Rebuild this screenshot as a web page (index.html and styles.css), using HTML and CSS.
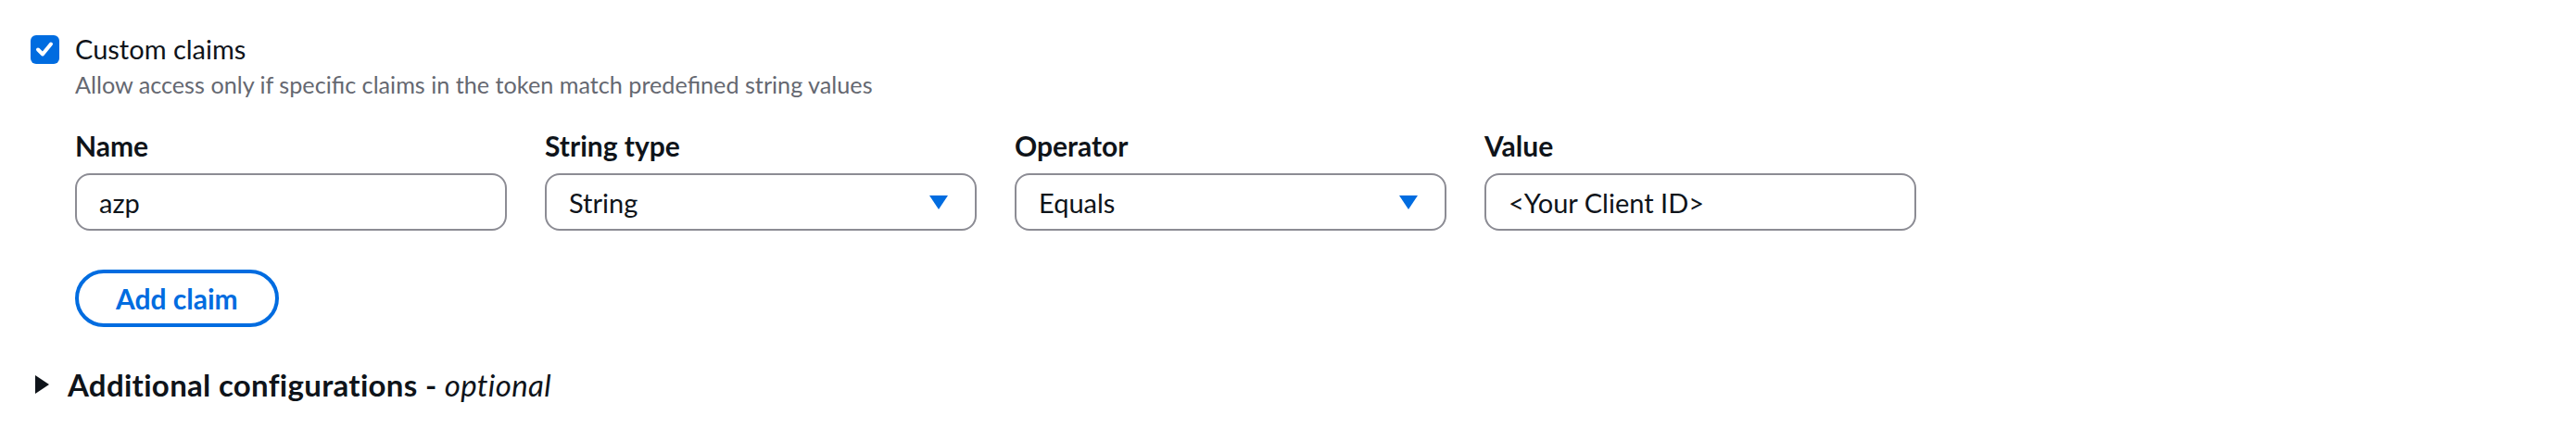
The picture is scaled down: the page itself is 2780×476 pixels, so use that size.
FILE: index.html
```html
<!DOCTYPE html>
<html lang="en">
<head>
<meta charset="utf-8">
<title>Custom claims</title>
<link rel="stylesheet" href="styles.css">
</head>
<body>
<div class="page">
  <div class="check-row">
    <span class="checkbox">
      <svg viewBox="0 0 30 30" width="30" height="30"><path d="M8 15.5 L13 20.5 L22 9.5" fill="none" stroke="#fff" stroke-width="4" stroke-linecap="round" stroke-linejoin="round"/></svg>
    </span>
    <div class="check-text">
      <div class="check-label">Custom claims</div>
      <div class="check-desc">Allow access only if specific claims in the token match predefined string values</div>
    </div>
  </div>

  <div class="claims">
    <div class="fields">
      <div class="field">
        <div class="label">Name</div>
        <div class="input">azp</div>
      </div>
      <div class="field">
        <div class="label">String type</div>
        <div class="input select"><span>String</span><span class="caret"></span></div>
      </div>
      <div class="field">
        <div class="label">Operator</div>
        <div class="input select"><span>Equals</span><span class="caret"></span></div>
      </div>
      <div class="field">
        <div class="label">Value</div>
        <div class="input">&lt;Your Client ID&gt;</div>
      </div>
    </div>
    <button class="btn" type="button">Add claim</button>
  </div>

  <div class="expand">
    <span class="tri"></span>
    <span class="expand-title">Additional configurations - <em>optional</em></span>
  </div>
</div>
</body>
</html>
```
FILE: styles.css
```css
* { box-sizing: border-box; }
html, body { margin: 0; padding: 0; background: #fff; }
body {
  font-family: Lato, "Open Sans", sans-serif;
  color: #0f141a;
}
.page {
  padding: 31px 0 0 33px;
}
.check-row {
  display: flex;
  align-items: flex-start;
  gap: 17px;
}
.checkbox {
  width: 31px;
  height: 31px;
  margin-top: 7px;
  border-radius: 6px;
  background: #006ce0;
  display: flex;
}
.check-label {
  font-size: 29px;
  line-height: 44px;
}
.check-desc {
  font-size: 25.2px;
  line-height: 32px;
  color: #656871;
}
.claims {
  margin-left: 48px;
  margin-top: 28px;
}
.fields {
  display: grid;
  grid-template-columns: repeat(4, 466px);
  column-gap: 41px;
}
.label {
  font-size: 30px;
  font-weight: 700;
  line-height: 44px;
  margin-bottom: 8px;
}
.input {
  height: 62px;
  border: 2px solid #8c8c94;
  border-radius: 16px;
  padding: 0 29px 0 24px;
  font-size: 29px;
  display: flex;
  align-items: center;
  justify-content: space-between;
}
.caret {
  width: 0;
  height: 0;
  border-left: 10px solid transparent;
  border-right: 10px solid transparent;
  border-top: 15px solid #006ce0;
}
.btn {
  margin-top: 42px;
  height: 62px;
  padding: 0 40px;
  border: 4px solid #006ce0;
  border-radius: 31px;
  background: #fff;
  color: #006ce0;
  font-family: inherit;
  font-size: 30px;
  font-weight: 700;
}
.expand {
  margin-top: 42px;
  display: flex;
  align-items: center;
  gap: 20px;
  padding-left: 5px;
}
.tri {
  width: 0;
  height: 0;
  border-top: 10px solid transparent;
  border-bottom: 10px solid transparent;
  border-left: 15px solid #0f141a;
}
.expand-title {
  font-size: 33px;
  line-height: 40px;
  font-weight: 700;
  letter-spacing: 0.3px;
}
.expand-title em {
  font-weight: 400;
}
```
